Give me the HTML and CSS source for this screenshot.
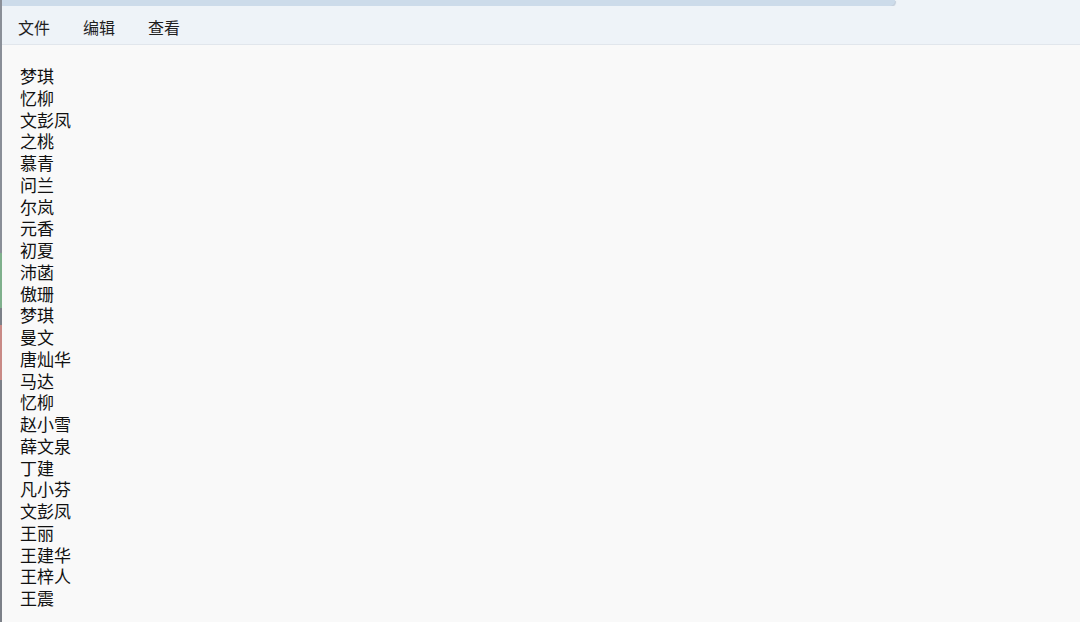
FILE: index.html
```html
<!DOCTYPE html>
<html lang="zh-CN">
<head>
    <meta charset="UTF-8">
    <title>记事本</title>
    <link rel="stylesheet" href="styles.css">
</head>
<body>
    <div class="window">
        <div class="edge"></div>
        <div class="main">
            <div class="tabstrip"><div class="tab"></div></div>
            <div class="menubar">
                <span class="menu">文件</span>
                <span class="menu">编辑</span>
                <span class="menu">查看</span>
            </div>
            <div class="editor">
                <div>梦琪</div>
                <div>忆柳</div>
                <div>文彭凤</div>
                <div>之桃</div>
                <div>慕青</div>
                <div>问兰</div>
                <div>尔岚</div>
                <div>元香</div>
                <div>初夏</div>
                <div>沛菡</div>
                <div>傲珊</div>
                <div>梦琪</div>
                <div>曼文</div>
                <div>唐灿华</div>
                <div>马达</div>
                <div>忆柳</div>
                <div>赵小雪</div>
                <div>薛文泉</div>
                <div>丁建</div>
                <div>凡小芬</div>
                <div>文彭凤</div>
                <div>王丽</div>
                <div>王建华</div>
                <div>王梓人</div>
                <div>王震</div>
            </div>
        </div>
    </div>
</body>
</html>
```

FILE: styles.css
```css
* {
    margin: 0;
    padding: 0;
    box-sizing: border-box;
}
html, body {
    width: 100%;
    height: 100%;
    overflow: hidden;
    background-color: #f9f9f9;
    font-family: "Noto Sans CJK SC", "Liberation Sans", sans-serif;
}
.window {
    display: flex;
    height: 100%;
}
/* fio de outra janela atrás */
.edge {
    width: 2px;
    flex-shrink: 0;
    background: linear-gradient(#8a8f98 0, #8a8f98 253px, #7fb08c 253px, #7fb08c 308px,
        #7c8088 308px, #7c8088 325px, #c98a86 325px, #c98a86 380px, #7c8088 380px);
}
.main {
    flex: 1;
    display: flex;
    flex-direction: column;
}
.tabstrip {
    height: 6px;
    flex-shrink: 0;
    background-color: #eef3f8;
}
.tab {
    width: 893px;
    height: 6px;
    background-color: #ccdbea;
    border-bottom-right-radius: 5px;
    box-shadow: 1px 1px 1px #c3cedb;
}
.menubar {
    height: 39px;
    flex-shrink: 0;
    background-color: #eef3f8;
    border-bottom: 1px solid #e1e6ec;
    display: flex;
    align-items: center;
    gap: 33px;
    padding-left: 16px;
    padding-top: 3px;
}
.menu {
    font-size: 16px;
    color: #1f1f1f;
}
.editor {
    flex: 1;
    min-height: 0;
    padding: 20px 18px 0;
    font-size: 17px;
    line-height: 21.75px;
    color: #111;
}
```
